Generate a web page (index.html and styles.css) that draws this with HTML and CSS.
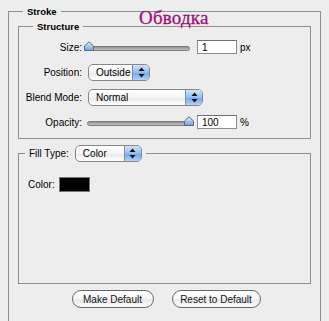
FILE: index.html
```html
<!DOCTYPE html>
<html lang="en">
<head>
    <meta charset="UTF-8">
    <title>Stroke</title>
    <link rel="stylesheet" href="styles.css">
</head>
<body>
    <div class="title">Обводка</div>

    <fieldset class="group stroke">
        <legend>Stroke</legend>

        <fieldset class="group structure">
            <legend>Structure</legend>
            <div class="rows">
                <label>Size:</label>
                <div class="control">
                    <div class="slider">
                        <div class="track"></div>
                        <svg class="thumb" style="left: -3px" width="10" height="10" viewBox="0 0 10 10">
                            <defs>
                                <linearGradient id="thumbFill" x1="0" y1="0" x2="0" y2="1">
                                    <stop offset="0" stop-color="#e4effc"/>
                                    <stop offset="1" stop-color="#6f9fdc"/>
                                </linearGradient>
                            </defs>
                            <path d="M0.5 9.5 V5 L5 0.8 L9.5 5 V9.5 Z" fill="url(#thumbFill)" stroke="#55698a"/>
                        </svg>
                    </div>
                    <input class="field" type="text" value="1">
                    <span class="unit">px</span>
                </div>

                <label>Position:</label>
                <div class="control">
                    <div class="popup popup-position">
                        <span class="popup-text">Outside</span>
                        <span class="popup-arrows">
                            <svg width="7" height="11" viewBox="0 0 7 11"><path d="M3.5 0.5 L6.5 4 H0.5 Z M3.5 10.5 L6.5 7 H0.5 Z" fill="#111"/></svg>
                        </span>
                    </div>
                </div>

                <label>Blend Mode:</label>
                <div class="control">
                    <div class="popup popup-blend">
                        <span class="popup-text">Normal</span>
                        <span class="popup-arrows">
                            <svg width="7" height="11" viewBox="0 0 7 11"><path d="M3.5 0.5 L6.5 4 H0.5 Z M3.5 10.5 L6.5 7 H0.5 Z" fill="#111"/></svg>
                        </span>
                    </div>
                </div>

                <label>Opacity:</label>
                <div class="control">
                    <div class="slider">
                        <div class="track"></div>
                        <svg class="thumb" style="left: 97px" width="10" height="10" viewBox="0 0 10 10">
                            <path d="M0.5 9.5 V5 L5 0.8 L9.5 5 V9.5 Z" fill="url(#thumbFill)" stroke="#55698a"/>
                        </svg>
                    </div>
                    <input class="field" type="text" value="100">
                    <span class="unit">%</span>
                </div>
            </div>
        </fieldset>

        <fieldset class="group fill">
            <legend>
                <span class="fill-label">Fill Type:</span>
                <div class="popup popup-fill">
                    <span class="popup-text">Color</span>
                    <span class="popup-arrows">
                        <svg width="7" height="11" viewBox="0 0 7 11"><path d="M3.5 0.5 L6.5 4 H0.5 Z M3.5 10.5 L6.5 7 H0.5 Z" fill="#111"/></svg>
                    </span>
                </div>
            </legend>
            <div class="color-row">
                <span>Color:</span>
                <span class="swatch"></span>
            </div>
        </fieldset>

        <div class="buttons">
            <button class="btn btn-make">Make Default</button>
            <button class="btn btn-reset">Reset to Default</button>
        </div>
    </fieldset>
</body>
</html>
```

FILE: styles.css
```css
html, body {
    overflow: hidden;
}
body {
    font-family: "Liberation Sans", Arial, sans-serif;
    font-size: 10px;
    color: #000;
    background-color: #ededed;
    margin: 0;
    padding: 0;
    position: relative;
}
.title {
    position: absolute;
    left: 139px;
    top: 8px;
    font-family: "Liberation Serif", "Times New Roman", serif;
    font-size: 19px;
    line-height: 19px;
    letter-spacing: 0.2px;
    color: #9c1078;
    -webkit-text-stroke: 0.3px #9c1078;
}
.group {
    border: 1px solid #8f8f8f;
    margin: 0;
    min-width: 0;
}
.group legend {
    font-weight: bold;
    font-size: 9.5px;
    line-height: 13px;
    padding: 0 4px;
}
.stroke {
    margin: 5px 8px 0;
    padding: 2px 9px 24px;
}
.stroke > legend {
    margin-left: 5px;
}
.structure {
    padding: 5px 0 7px;
}
.structure > legend {
    margin-left: 14px;
}
.rows {
    display: grid;
    grid-template-columns: 63px 1fr;
    grid-auto-rows: 18px;
    row-gap: 7px;
    column-gap: 5px;
    align-items: center;
}
.rows label {
    text-align: right;
}
.control {
    display: flex;
    align-items: center;
}
.slider {
    position: relative;
    width: 103px;
    height: 14px;
    display: flex;
    align-items: center;
}
.track {
    width: 100%;
    height: 5px;
    box-sizing: border-box;
    border: 1px solid #7b7b7b;
    border-radius: 3px;
    background: linear-gradient(#8e8e8e, #c4c4c4);
    margin-top: 2px;
}
.thumb {
    position: absolute;
    top: 1px;
}
.field {
    width: 40px;
    height: 14px;
    box-sizing: border-box;
    border: 1px solid #8c8c8c;
    border-top-color: #6e6e6e;
    background: #fff;
    font-family: inherit;
    font-size: 10px;
    padding: 0 0 0 4px;
    margin: 0 0 0 7px;
    outline: none;
}
.unit {
    margin-left: 3px;
}
.popup {
    display: inline-flex;
    height: 17px;
    box-sizing: border-box;
    border: 1px solid #878787;
    border-radius: 5px;
    overflow: hidden;
    background: linear-gradient(#ffffff, #f4f4f4 50%, #e8e8e8 51%, #ffffff);
    font-weight: normal;
    font-size: 10px;
    vertical-align: middle;
}
.popup-text {
    flex: 1;
    padding-left: 7px;
    line-height: 15px;
}
.popup-arrows {
    width: 16px;
    display: flex;
    align-items: center;
    justify-content: center;
    border-left: 1px solid #6f8fbd;
    background: linear-gradient(#cfe2f9, #93bdf0 50%, #6ea5e8 51%, #b3d3f8);
}
.popup-position {
    width: 62px;
    margin-left: 1px;
}
.popup-blend {
    width: 115px;
    margin-left: 1px;
}
.popup-fill {
    width: 67px;
    margin-left: 6px;
}
.fill {
    margin-top: 6px;
    padding: 15px 0 91px;
}
.fill > legend {
    margin-left: 6px;
    line-height: 17px;
    display: flex;
    align-items: center;
}
.fill-label {
    font-weight: normal;
    font-size: 10px;
}
.color-row {
    display: flex;
    align-items: center;
    gap: 4px;
    margin-left: 9px;
}
.swatch {
    width: 31px;
    height: 15px;
    box-sizing: border-box;
    background: #000;
    border: 1px solid #777;
}
.buttons {
    display: flex;
    justify-content: center;
    gap: 18px;
    margin-top: 6px;
    padding-left: 3px;
}
.btn {
    height: 18px;
    box-sizing: border-box;
    border: 1px solid #666;
    border-radius: 9px;
    background: linear-gradient(#ffffff, #f6f6f6 50%, #e9e9e9 51%, #fbfbfb);
    font-family: inherit;
    font-size: 10px;
    color: #111;
    padding: 0;
}
.btn-make {
    width: 82px;
}
.btn-reset {
    width: 89px;
}
```
